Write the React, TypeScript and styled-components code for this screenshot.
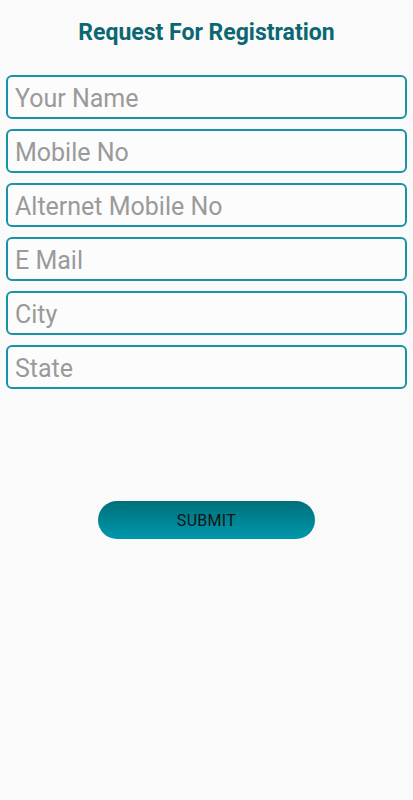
import { createGlobalStyle, styled } from "styled-components"

const GlobalStyle = createGlobalStyle`
  html, body {
    margin: 0;
    padding: 0;
    background: #fafafa;
    font-family: Roboto, "Liberation Sans", sans-serif;
  }
  * {
    box-sizing: border-box;
  }
`

const Screen = styled.div`
  display: flex;
  flex-direction: column;
  width: 413px;
  min-height: 800px;
  padding: 0 6px;
  background: #fafafa;
`

const Title = styled.h1`
  margin: 19px 0 0;
  height: 28px;
  line-height: 28px;
  text-align: center;
  font-size: 23px;
  font-weight: 700;
  color: #0b6772;
`

const Form = styled.form`
  display: flex;
  flex-direction: column;
  gap: 10px;
  margin-top: 28px;
`

const Field = styled.input`
  width: 100%;
  height: 44px;
  padding: 2px 7px 0;
  border: 2px solid #1893a6;
  border-radius: 6px;
  background: #fcfcfc;
  font-family: Roboto, "Liberation Sans", sans-serif;
  font-size: 25px;
  color: #333;
  outline: none;
  &::placeholder {
    color: #9a9a9a;
  }
`

const Submit = styled.button`
  align-self: center;
  width: 217px;
  height: 38px;
  margin-top: 102px;
  padding-top: 2px;
  border: none;
  border-radius: 19px;
  background: linear-gradient(180deg, #006f7b 0%, #0098ab 100%);
  font-family: Roboto, "Liberation Sans", sans-serif;
  font-size: 16px;
  letter-spacing: 0.3px;
  color: #151515;
  cursor: pointer;
`

const fields = ["Your Name", "Mobile No", "Alternet Mobile No", "E Mail", "City", "State"]

export default function App() {
  return (
    <Screen>
      <GlobalStyle />
      <Title>Request For Registration</Title>
      <Form onSubmit={e => e.preventDefault()}>
        {fields.map(f => (
          <Field key={f} placeholder={f} />
        ))}
        <Submit type="submit">SUBMIT</Submit>
      </Form>
    </Screen>
  )
}
